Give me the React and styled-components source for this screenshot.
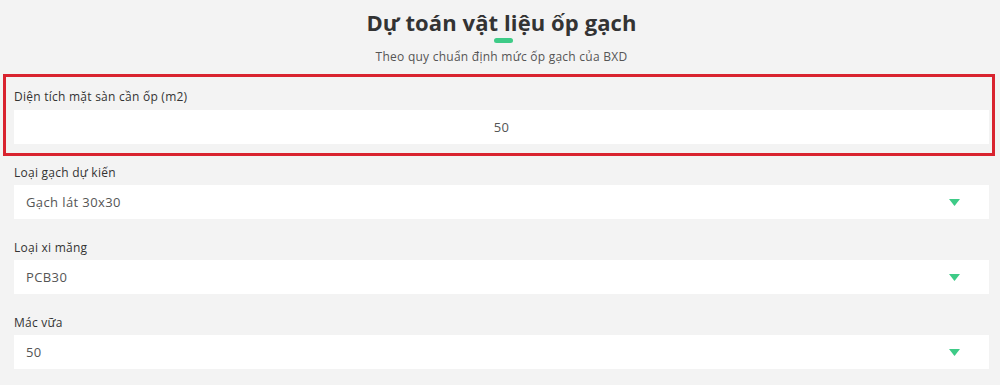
import styled, { createGlobalStyle } from "styled-components";

const GlobalStyle = createGlobalStyle`
  html, body {
    margin: 0;
    padding: 0;
    background: #f3f3f3;
  }

  body {
    font-family: "Open Sans", "Noto Sans", sans-serif;
    color: #333;
  }

  * {
    box-sizing: border-box;
  }
`

const Page = styled.div`
  display: flex;
  flex-direction: column;
  padding: 0 11px 0 14px;
  width: 1000px;
  height: 385px;
  overflow: hidden;
`

const Heading = styled.div`
  display: flex;
  flex-direction: column;
  align-items: center;
  padding-top: 8px;

  h1 {
    margin: 0;
    font-size: 22px;
    line-height: 28px;
    font-weight: 700;
    letter-spacing: 0.1px;
    color: #333;
  }

  p {
    margin: 6px 0 0;
    font-size: 12px;
    line-height: 16px;
    letter-spacing: 0.25px;
    color: #555;
  }
`

const GreenBar = styled.span`
  display: block;
  width: 19px;
  height: 5px;
  margin-top: 2px;
  margin-left: 4px;
  border-radius: 3px;
  background: #3ecb87;
`

const Highlight = styled.div`
  margin: 9px -6px 8px -11px;
  padding: 11px 3px 9px 8px;
  border: 3px solid #d9232f;
`

const Group = styled.div`
  display: flex;
  flex-direction: column;
  gap: ${(p) => (p.$boxed ? "4px" : "3px")};
  margin-bottom: ${(p) => (p.$boxed ? 0 : "20px")};
`

const Label = styled.label`
  font-size: 12px;
  line-height: 18px;
  letter-spacing: 0.25px;
  color: #333;
`

const TextInput = styled.input`
  height: 34px;
  width: 100%;
  border: none;
  outline: none;
  background: #fff;
  font-family: inherit;
  font-size: 13px;
  letter-spacing: 0.4px;
  color: #555;
  text-align: center;
`

const SelectWrap = styled.div`
  position: relative;
  height: 34px;
`

const Select = styled.select`
  appearance: none;
  width: 100%;
  height: 100%;
  border: none;
  outline: none;
  background: #fff;
  padding: 0 12px;
  font-family: inherit;
  font-size: 13px;
  letter-spacing: 0.4px;
  color: #555;
`

const Arrow = styled.svg`
  position: absolute;
  right: 29px;
  top: 14px;
  pointer-events: none;
`

function Dropdown({ value, options }) {
  return (
    <SelectWrap>
      <Select defaultValue={value}>
        {options.map((o) => (
          <option key={o}>{o}</option>
        ))}
      </Select>
      <Arrow width="11" height="7" viewBox="0 0 11 7">
        <path d="M0 0 H11 L5.5 7 Z" fill="#3ecb87" />
      </Arrow>
    </SelectWrap>
  );
}

function App() {
  return (
    <Page>
      <GlobalStyle />
      <Heading>
        <h1>Dự toán vật liệu ốp gạch</h1>
        <GreenBar />
        <p>Theo quy chuẩn định mức ốp gạch của BXD</p>
      </Heading>

      <Highlight>
        <Group $boxed>
          <Label>Diện tích mặt sàn cần ốp (m2)</Label>
          <TextInput defaultValue="50" />
        </Group>
      </Highlight>

      <Group>
        <Label>Loại gạch dự kiến</Label>
        <Dropdown value="Gạch lát 30x30" options={["Gạch lát 30x30", "Gạch lát 40x40", "Gạch lát 60x60"]} />
      </Group>

      <Group>
        <Label>Loại xi măng</Label>
        <Dropdown value="PCB30" options={["PCB30", "PCB40"]} />
      </Group>

      <Group>
        <Label>Mác vữa</Label>
        <Dropdown value="50" options={["50", "75", "100"]} />
      </Group>
    </Page>
  );
}

export default App;
